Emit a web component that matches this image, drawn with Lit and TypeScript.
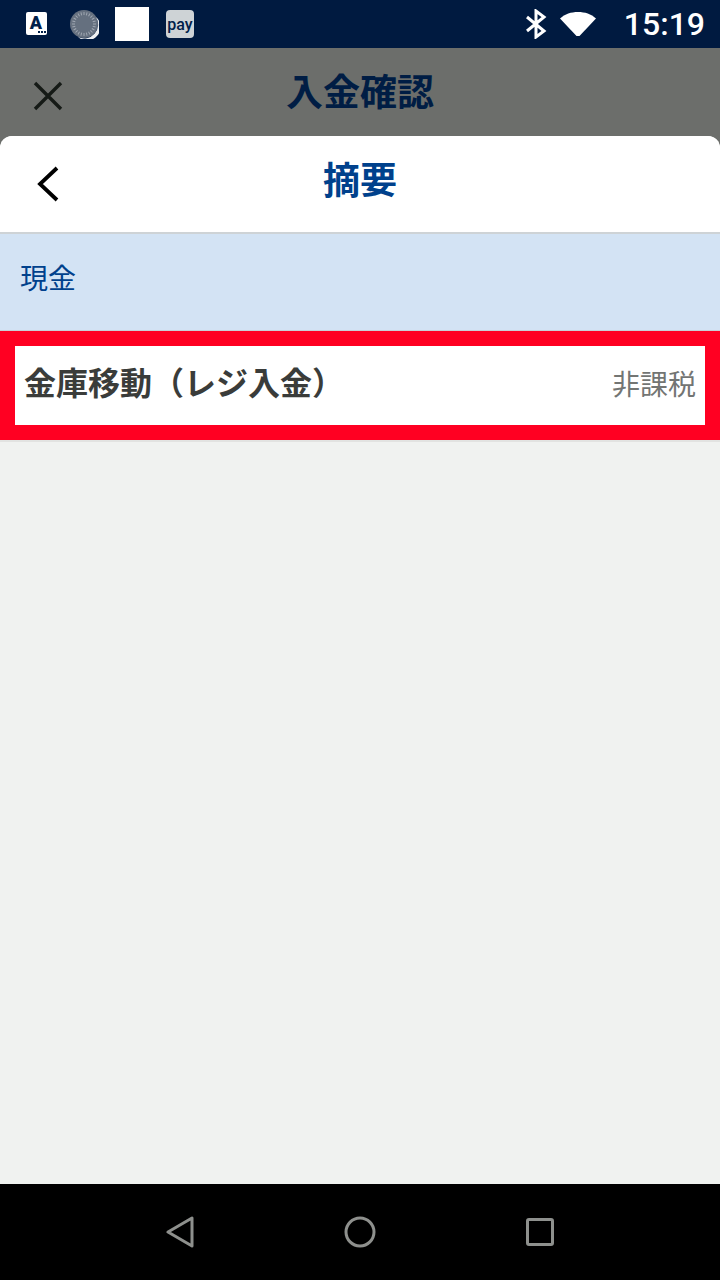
import { css, html, LitElement, svg, type TemplateResult } from "lit";
import { customElement } from "lit/decorators.js";

const ticks = Array.from({ length: 24 }, (_, i) => (i * 360) / 24);

@customElement("app-root")
export class AppRoot extends LitElement {
  private statusBar(): TemplateResult {
    return html`
      <div class="status">
        <svg class="st-a" width="24" height="26" viewBox="0 0 24 26">
          <rect x="1" y="1" width="21" height="23" rx="2" fill="#fff" />
          <text x="11" y="18" class="a-letter">A</text>
          <rect x="13" y="20" width="2" height="2" fill="#00204a" />
          <rect x="16" y="20" width="2" height="2" fill="#00204a" />
          <rect x="19" y="20" width="2" height="2" fill="#00204a" />
        </svg>
        <svg class="st-dial" width="30" height="30" viewBox="0 0 30 30">
          <circle cx="15" cy="15" r="14" fill="#65707f" />
          <path d="M9 28a14 14 0 0 0 18-20a11 11 0 0 1-18 20z" fill="#eef0f2" />
          ${ticks.map(
            (a) => svg`<line x1="15" y1="3" x2="15" y2="6" stroke="#a0a7b2" stroke-width="1" transform="rotate(${a} 15 15)" />`
          )}
        </svg>
        <div class="st-white"></div>
        <div class="st-pay">pay</div>
        <div class="spacer"></div>
        <svg class="st-bt" width="22" height="30" viewBox="0 0 22 30">
          <path d="M2 8l17 14-8 6V2l8 6L2 22" fill="none" stroke="#fff" stroke-width="3" />
        </svg>
        <svg class="st-wifi" width="36" height="26" viewBox="0 0 36 26">
          <path d="M0 7.5C5 3 11 1 18 1s13 2 18 6.5L19.5 25h-3z" fill="#fff" />
        </svg>
        <div class="clock">15:19</div>
      </div>
    `;
  }

  protected render(): TemplateResult {
    return html`
      ${this.statusBar()}
      <div class="dim-header">
        <svg class="close" width="30" height="30" viewBox="0 0 30 30">
          <path d="M2 2l26 26M28 2L2 28" stroke="#151a16" stroke-width="3.4" fill="none" />
        </svg>
        <div class="dim-title">入金確認</div>
      </div>
      <div class="sheet">
        <div class="sheet-header">
          <svg class="back" width="24" height="36" viewBox="0 0 24 36">
            <path d="M21 2L4 18l17 16" stroke="#000" stroke-width="3.8" fill="none" />
          </svg>
          <div class="sheet-title">摘要</div>
        </div>
        <div class="section">現金</div>
        <div class="selected">
          <div class="row">
            <span class="row-name">金庫移動（レジ入金）</span>
            <span class="row-tax">非課税</span>
          </div>
        </div>
        <div class="rest"></div>
      </div>
      <div class="nav">
        <svg width="28" height="32" viewBox="0 0 28 32">
          <path d="M26 2v28L2 16z" fill="none" stroke="#8e908d" stroke-width="3" stroke-linejoin="round" />
        </svg>
        <svg width="32" height="32" viewBox="0 0 32 32">
          <circle cx="16" cy="16" r="14" fill="none" stroke="#8e908d" stroke-width="3" />
        </svg>
        <svg width="28" height="28" viewBox="0 0 28 28">
          <rect x="1.5" y="1.5" width="25" height="25" rx="1.5" fill="none" stroke="#8e908d" stroke-width="3" />
        </svg>
      </div>
    `;
  }

  static styles = css`
    :host {
      display: flex;
      flex-direction: column;
      height: 1280px;
      width: 720px;
      background: #6c6e6b;
      font-family: "Noto Sans CJK JP", "Liberation Sans", sans-serif;
      overflow: hidden;
    }

    .status {
      align-items: center;
      background: #001a40;
      box-sizing: border-box;
      display: flex;
      flex: none;
      height: 48px;
      padding-left: 25px;
      padding-right: 15px;
    }

    .status svg {
      display: block;
      flex: none;
    }

    .a-letter {
      fill: #00204a;
      font-family: "Roboto", sans-serif;
      font-size: 18px;
      font-weight: 900;
      text-anchor: middle;
    }

    .st-dial {
      margin-left: 20px;
    }

    .st-white {
      background: #fff;
      height: 34px;
      margin-left: 16px;
      width: 34px;
    }

    .st-pay {
      align-items: center;
      background: #ced3d6;
      border-radius: 4px;
      color: #00204a;
      display: flex;
      font-family: "Roboto", sans-serif;
      font-size: 16px;
      font-weight: 500;
      height: 28px;
      justify-content: center;
      margin-left: 17px;
      width: 28px;
    }

    .spacer {
      flex: 1;
    }

    .st-wifi {
      margin-left: 13px;
    }

    .clock {
      color: #fff;
      font-family: "Roboto", sans-serif;
      font-size: 32px;
      font-weight: 500;
      line-height: 48px;
      margin-left: 28px;
    }

    .dim-header {
      align-items: center;
      background: #6c6e6b;
      display: flex;
      flex: none;
      height: 88px;
      justify-content: center;
      position: relative;
    }

    .close {
      left: 33px;
      position: absolute;
      top: 33px;
    }

    .dim-title {
      color: #001d44;
      font-size: 37px;
      font-weight: 700;
      line-height: 88px;
      margin-bottom: 4px;
    }

    .sheet {
      background: #f0f2f0;
      border-radius: 12px 12px 0 0;
      display: flex;
      flex: 1;
      flex-direction: column;
      overflow: hidden;
    }

    .sheet-header {
      align-items: center;
      background: #fff;
      border-bottom: 2px solid #ced3d6;
      display: flex;
      flex: none;
      height: 96px;
      justify-content: center;
      position: relative;
    }

    .back {
      left: 36px;
      position: absolute;
      top: 30px;
    }

    .sheet-title {
      color: #00418c;
      font-size: 37px;
      font-weight: 700;
      line-height: 80px;
      margin-bottom: 12px;
    }

    .section {
      background: #d3e3f4;
      border-bottom: 1px solid #c8cfd6;
      box-sizing: border-box;
      color: #00418c;
      flex: none;
      font-size: 28px;
      height: 97px;
      line-height: 86px;
      padding-left: 20px;
    }

    .selected {
      background: #ff0022;
      box-sizing: border-box;
      flex: none;
      height: 109px;
      padding: 15px;
    }

    .row {
      align-items: center;
      background: #fff;
      box-sizing: border-box;
      display: flex;
      height: 79px;
      justify-content: space-between;
      padding: 0 9px;
    }

    .row-name {
      color: #3a3c3a;
      font-size: 32px;
      font-weight: 700;
      margin-bottom: 10px;
    }

    .row-tax {
      color: #737573;
      font-size: 28px;
      margin-bottom: 6px;
    }

    .rest {
      border-top: 2px solid #e2e3e1;
      flex: 1;
    }

    .nav {
      align-items: center;
      background: #000;
      display: flex;
      flex: none;
      height: 96px;
      justify-content: center;
    }

    .nav svg:nth-child(1) {
      margin-right: 150px;
    }

    .nav svg:nth-child(3) {
      margin-left: 150px;
    }
  `;
}
